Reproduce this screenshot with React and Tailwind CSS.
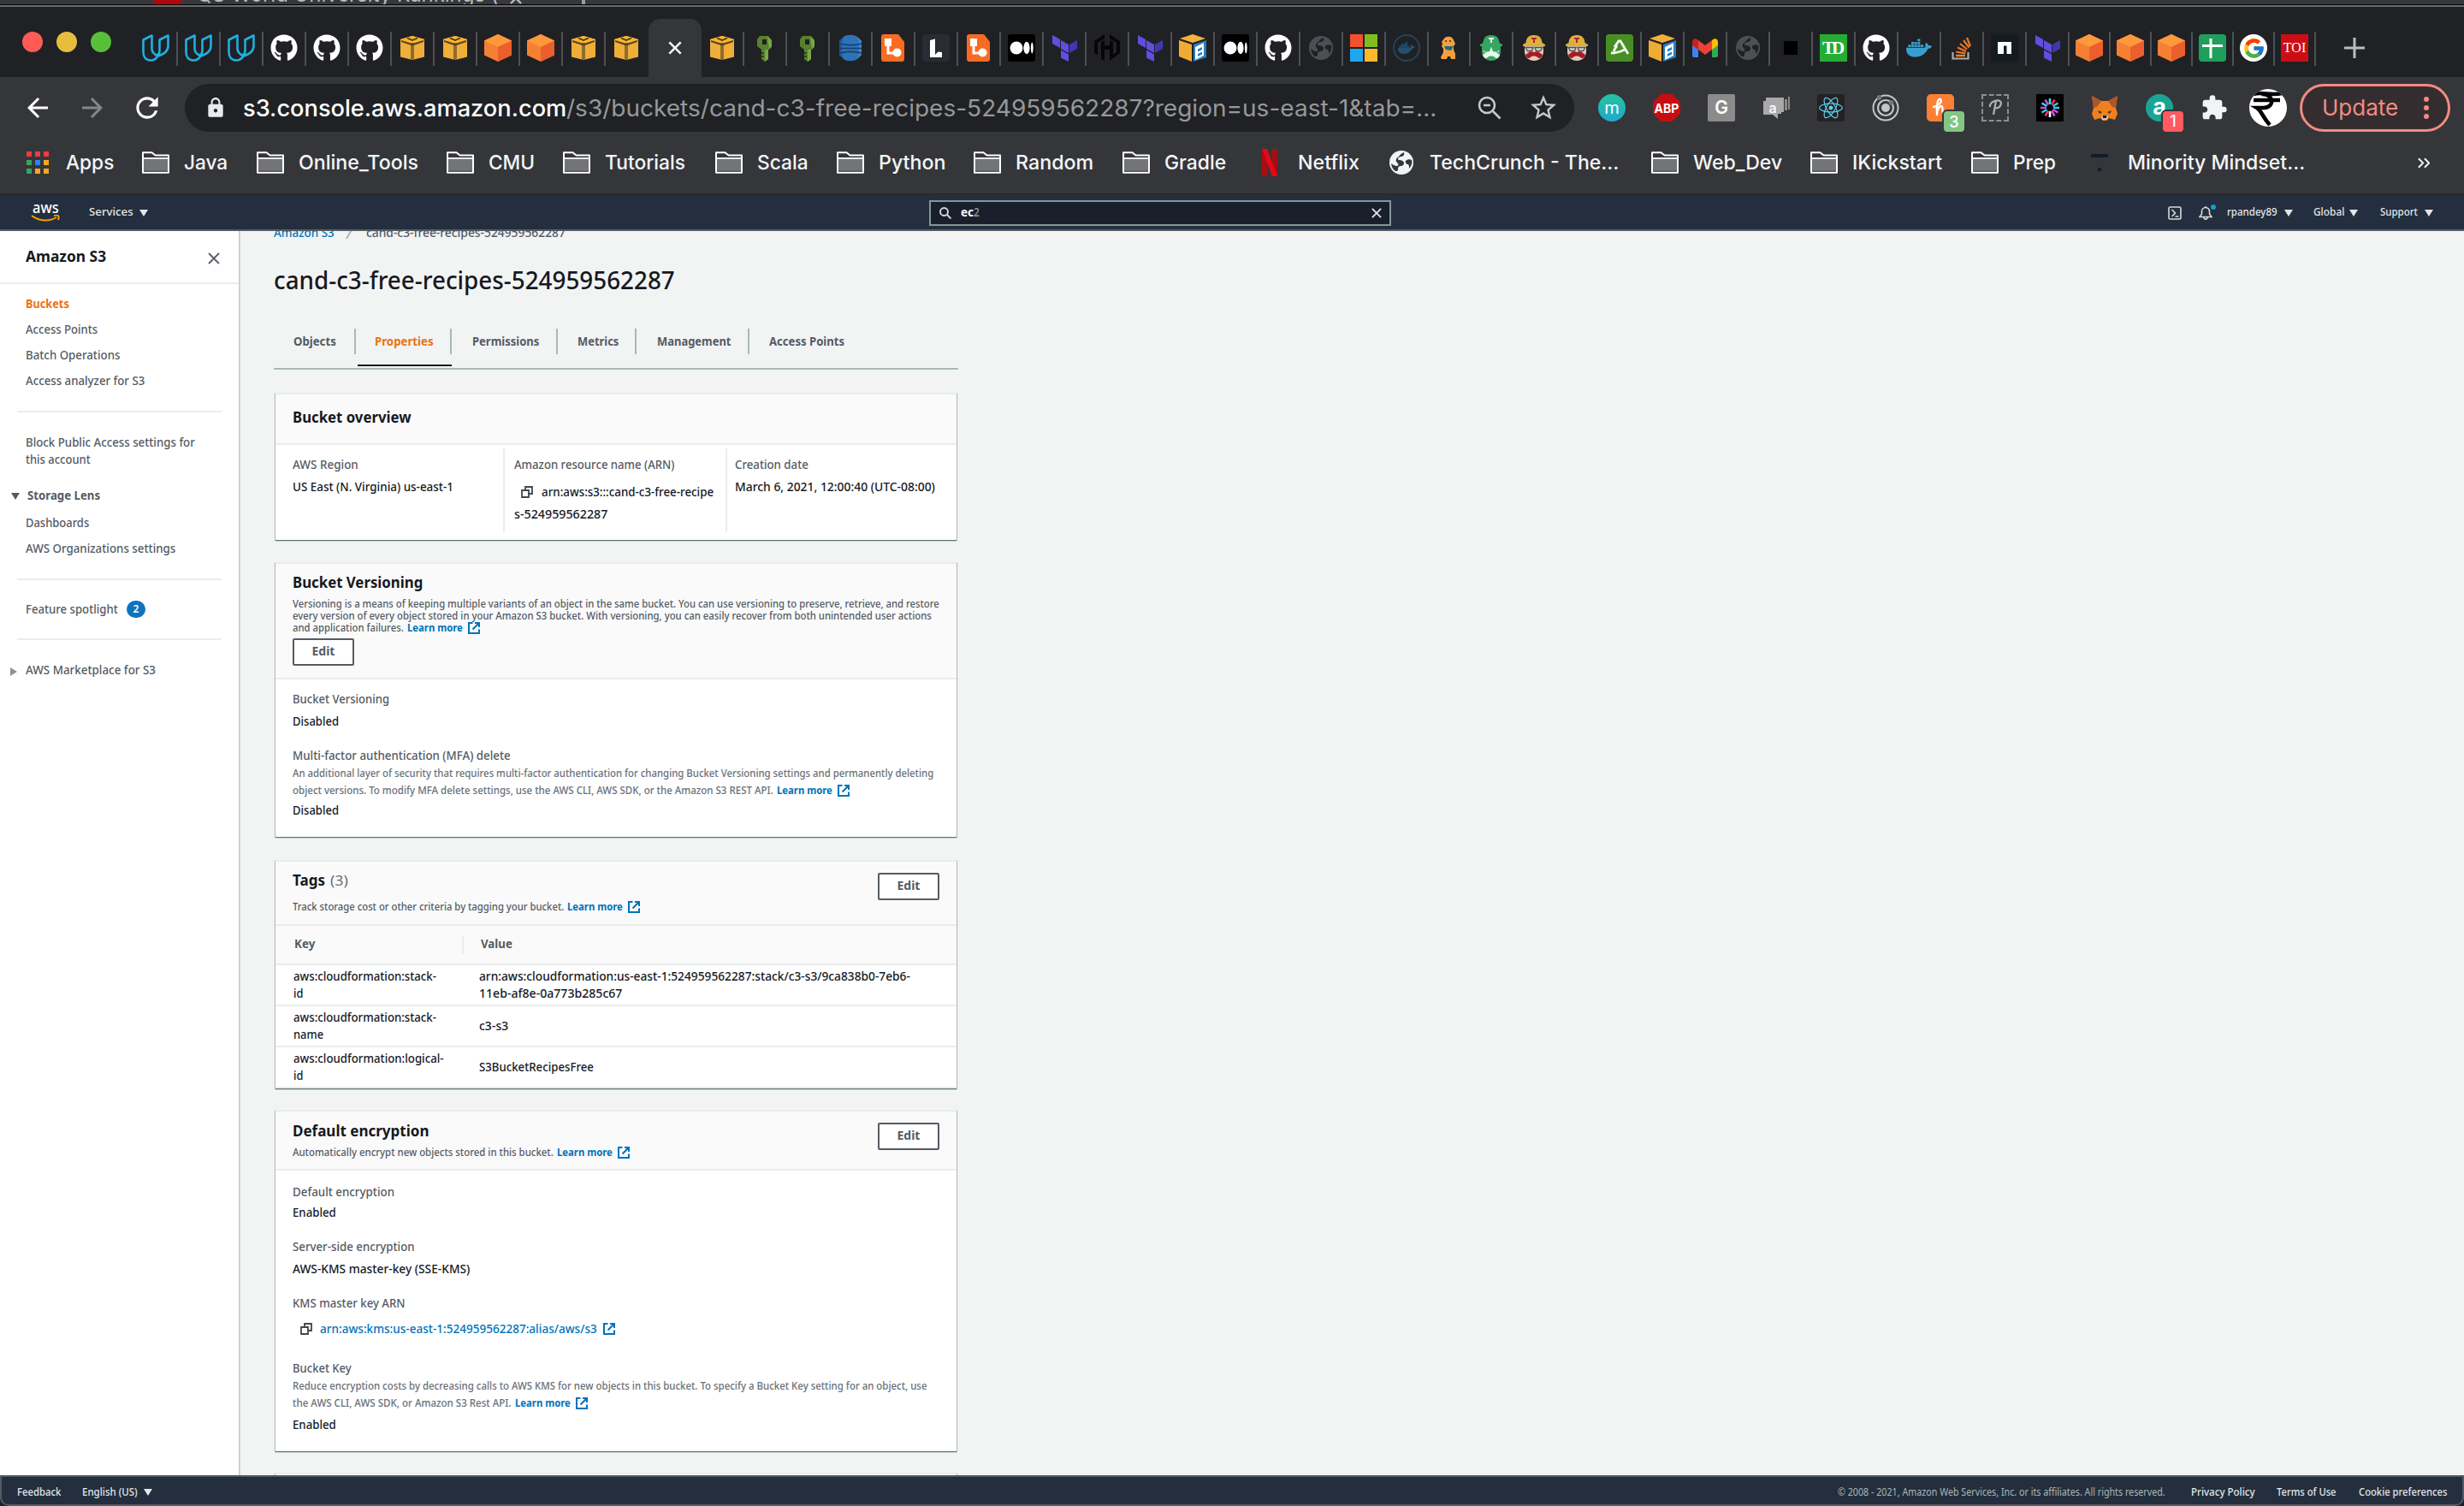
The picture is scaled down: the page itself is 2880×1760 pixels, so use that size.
import React, { useLayoutEffect, useRef, useState } from "react";
import { FaGithub, FaDocker, FaReact } from "react-icons/fa";
import { FcGoogle } from "react-icons/fc";
import { MdExtension, MdArrowBack, MdArrowForward, MdRefresh, MdLock, MdStarBorder } from "react-icons/md";

/* Single line of text condensed to a given width. */
function T({ w, className = "", children }) {
  const ref = useRef(null);
  const [k, setK] = useState(1);
  useLayoutEffect(() => {
    if (ref.current) setK(w / ref.current.offsetWidth);
  }, [w]);
  return (
    <span className={"inline-block shrink-0 whitespace-nowrap " + className} style={{ width: w }}>
      <span ref={ref} className="inline-block origin-left" style={{ transform: `scaleX(${k})` }}>
        {children}
      </span>
    </span>
  );
}

/* ---------- tab icons ---------- */
const Github = () => <FaGithub className="size-8 text-white" />;
const Udacity = () => (
  <svg viewBox="0 0 32 32" className="size-8" fill="none" stroke="#1fb0e0" strokeWidth="2.600" strokeLinejoin="round">
    <path d="M1.500 6.500 11.500 1.500v15.500c0 4 3 6.500 7 8.500-2 3-4 5-8 5-6 0-9-4-9-9.500z" />
    <path d="M18.500 25.500c7-2 12-6 12-12V1.500L20.500 6.500V19c0 3-1 5-4 5.500" />
  </svg>
);
const GoldBox = () => (
  <svg viewBox="0 0 32 32" className="size-8">
    <path d="M2 6 16 2l14 4v20.500L16 30 2 26.500z" fill="#efae3a" />
    <path d="M2 6 16 2l14 4-14 5z" fill="#fab42c" />
    <path d="M14 10h4v20h-4z" fill="#8d6c2f" />
    <path d="M3 7l13 4 13-4v2l-13 4.500L3 9z" fill="#5b451d" />
    <path d="m10 4.500 6 2.500 6-2.500" fill="none" stroke="#463818" strokeWidth="1.800" />
  </svg>
);
const OrangeCube = () => (
  <svg viewBox="0 0 32 32" className="size-8">
    <path d="M16 0 32 7.500v17L16 32 0 24.500v-17z" fill="#f58033" />
    <path d="M16 0 32 7.500 16 15 0 7.500z" fill="#fd993a" />
    <path d="M32 7.500v17L16 32V15z" fill="#ea5f2d" />
  </svg>
);
const KeyIcon = () => (
  <svg viewBox="0 0 32 32" className="size-8">
    <path d="M10 2h10l4 5v8l-4 4v10l-4 3-4-3V18l-5-4V6z" fill="#58802f" />
    <path d="M16 18h4v11l-4 3zM19 3l5 4v7l-3 3z" fill="#7aa648" />
    <path d="M13 6h5v6h-5z" fill="#202124" />
    <path d="M12 21h3v2h-3zM12 25h3v2h-3z" fill="#2e4518" />
  </svg>
);
const Dynamo = () => (
  <svg viewBox="0 0 32 32" className="size-8">
    <path d="M8 3c4-3 12-3 16 0l5 5v16l-5 5c-4 3-12 3-16 0l-5-5V8z" fill="#2e73b8" />
    <path d="M8 3c-3 8-3 18 0 26l-5-5V8z" fill="#215a96" />
    <path d="M24 3c3 8 3 18 0 26l5-5V8z" fill="#3f87c9" />
    <path d="M3 11c8 2 18 2 26 0M3 16.500h26M3 22c8-2 18-2 26 0" stroke="#173f6e" strokeWidth="1.500" fill="none" />
  </svg>
);
const Lucid = () => (
  <svg viewBox="0 0 32 32" className="size-8">
    <path d="M5 0h17l7 9v20a3 3 0 0 1-3 3H5a3 3 0 0 1-3-3V3a3 3 0 0 1 3-3z" fill="#f96b22" />
    <path d="M10 10v12h8" fill="none" stroke="#fff" strokeWidth="3" />
    <path d="M6 5h8v9H6z" fill="#fff" />
    <circle cx="20.500" cy="21.500" r="5" fill="#fff" />
  </svg>
);
const DarkL = () => (
  <svg viewBox="0 0 32 32" className="size-8">
    <rect width="32" height="32" rx="4" fill="#282c33" />
    <path d="M9 7l6-1.500V20l8 1v6H9z" fill="#fff" />
    <path d="m15 24 4-4-4-1z" fill="#282c33" />
  </svg>
);
const Medium = () => (
  <svg viewBox="0 0 32 32" className="size-8">
    <rect width="32" height="32" rx="3" fill="#000" />
    <circle cx="10" cy="16" r="7.500" fill="#fff" />
    <ellipse cx="22" cy="16" rx="3.600" ry="7.200" fill="#fff" />
    <ellipse cx="28.300" cy="16" rx="1.400" ry="6.500" fill="#fff" />
  </svg>
);
const Terraform = () => (
  <svg viewBox="0 0 32 32" className="size-8">
    <path d="m2 1 9 5v10l-9-5zM12 7l9 5v10l-9-5zM12 18.500l9 5V32l-9-4.500z" fill="#5f4ee0" />
    <path d="m31 7-9 5v10l9-5z" fill="#4038b0" />
  </svg>
);
const Hashi = () => (
  <svg viewBox="0 0 32 32" className="size-8" fill="#070708">
    <path d="M13 0v5L5 10v14l-4-2V8zM13 7v6h6V7l4 2v18l-4-2v-7h-6v13l-4-2V9zM19 0l12 8v14l-12 9v-5l8-5V10l-8-5z" />
  </svg>
);
const BoxDoc = () => (
  <svg viewBox="0 0 32 32" className="size-8">
    <path d="M16 0 31 5 16 10 1 5z" fill="#f3b13c" />
    <path d="M0 7l15 5v20L0 26z" fill="#f0ab34" />
    <path d="m17 12 15-5v20l-15 5z" fill="#2b7cc0" />
    <path d="m19 15 10-5v15l-10 5z" fill="#fff" />
    <path d="m22 17.500 5-2.500v3l-5 2.500zM22 23l5-2.500v3L22 26z" fill="#2b7cc0" />
  </svg>
);
const Globe = ({ c = "#4c4f53", bg = "#202124" }) => (
  <svg viewBox="0 0 32 32" className="size-8">
    <circle cx="16" cy="16" r="14" fill={c} />
    <path d="M19 4c1 3-1 5-4 5-3 1-4 3-2 4 3 0 6 1 6 4 0 2-2 3-4 3-3 0-3 3-3 5-1 1-2 1-3 1-3-2-4.500-5-5-9 2 1 4 3 7 3 3-1 1-3-1-5-1-3 1-5 3-6 1-2 3-4 6-5zM28 13c-2-1-5-1-7 1-1 2 1 4 3 4 1 1 1 3 1 5 3-3 4-7 3-10z" fill={bg} />
  </svg>
);
const Microsoft = () => (
  <div className="grid size-8 grid-cols-2 gap-[2px]">
    <i className="bg-[#f25130]" /><i className="bg-[#80bc20]" /><i className="bg-[#1ea7ee]" /><i className="bg-[#fdb92c]" />
  </div>
);
const DockerRing = () => (
  <div className="flex size-8 items-center justify-center rounded-full border-2 border-[#24445a]">
    <FaDocker className="size-5 text-[#24516d]" />
  </div>
);
const Puppy = () => (
  <svg viewBox="0 0 32 32" className="size-8">
    <path d="M11 5c2-3 8-3 10 0l3 6-2 3v4l2 5v6h-5l-1-3h-3l-1 3H8l-1-2 3-6v-4l-2-3 1-3-1-2z" fill="#f5a040" />
    <path d="M11 14h11l-3 5-6-1z" fill="#1f6b78" />
    <circle cx="13" cy="8" r="1" fill="#3a2a1a" /><circle cx="18" cy="8" r="1" fill="#3a2a1a" />
  </svg>
);
const Travis = ({ green }) => (
  <svg viewBox="0 0 32 32" className="size-8">
    <path d="M5 12h22v8c0 7-5 11-11 11S5 27 5 20z" fill={green ? "#37a661" : "#e2cbbb"} />
    <path d="M7 15h18v6l-4-1-5 2-5-2-4 1z" fill={green ? "#e8f6ec" : "#e2cbbb"} />
    <path d="M9 22c3-3 5-1 7-1s4-2 7 1l3 2c-1 4-4 5-6 3-1-2-7-2-8 0-2 2-5 1-6-3z" fill={green ? "#e8f6ec" : "#a51c24"} />
    <path d="M16 1C9 1 7 5 6.500 10L3 12v2h26v-2l-3.500-2C25 5 23 1 16 1z" fill={green ? "#37a661" : "#d9b13b"} />
    <path d="M13 4h6v2h-2v4h-2V6h-2z" fill={green ? "#e8f6ec" : "#b5232c"} />
    <path d="M6 15.500h9l-1.500 4h-5zM17 15.500h9l-2.500 4h-5z" fill={green ? "#37a661" : "#cbd3d4"} stroke={green ? "#37a661" : "#55504c"} strokeWidth="1.300" />
  </svg>
);
const GreenA = () => (
  <svg viewBox="0 0 32 32" className="size-8">
    <rect width="32" height="32" rx="4" fill="#478f25" />
    <path d="M10 15 15 8h2l9 15M6 22c6 0 12-2 16-4M13 13l-4 7" fill="none" stroke="#f2f8ee" strokeWidth="2.800" />
  </svg>
);
const Gmail = () => (
  <svg viewBox="0 0 32 32" className="size-8">
    <path d="M1 10h7v17H3a2 2 0 0 1-2-2z" fill="#3f82ee" />
    <path d="M24 10h7v15a2 2 0 0 1-2 2h-5z" fill="#33a853" />
    <path d="M24 7c3-3 7-2 7 2v4l-7 5z" fill="#fbbc05" />
    <path d="M1 9c0-4 4-5 7-2v11l-7-5z" fill="#c5221f" />
    <path d="m8 7 8 6 8-6v11l-8 6-8-6z" fill="#ea4335" />
  </svg>
);
const BlackSquare = () => <div className="size-4 bg-black" />;
const TD = () => (
  <div className="flex size-8 items-center justify-center bg-[#23ad35] font-['Liberation_Serif'] text-[21px] leading-none font-bold tracking-[-3px] text-white">
    <span className="pr-[3px]">TD</span>
  </div>
);
const Docker = () => <FaDocker className="size-[30px] text-[#3a9fd0]" />;
const Stack = () => (
  <svg viewBox="0 0 32 32" className="size-8" fill="none">
    <path d="M5.500 21v7.500h18V21" stroke="#a9adb3" strokeWidth="2.200" />
    <path d="M9 25h11" stroke="#f48024" strokeWidth="2.400" />
    <path d="m9.300 20.500 11 1.800M11 15.500l10 4.500M14 11l8 6.500M18 7l6.500 8.500M22 4l4 10" stroke="#e8782a" strokeWidth="2.200" />
  </svg>
);
const Npm = () => (
  <svg viewBox="0 0 32 32" className="size-8">
    <rect width="32" height="32" fill="#141b22" />
    <path d="M8 9h16v14h-5.500V13.500h-3.500V23H8z" fill="#fff" />
  </svg>
);
const Sheets = () => (
  <svg viewBox="0 0 32 32" className="size-8">
    <rect width="32" height="32" rx="4" fill="#209e5b" />
    <path d="M4 12h24v3H4zM12.500 5h3v23h-3z" fill="#fff" />
  </svg>
);
const Google = () => (
  <div className="flex size-8 items-center justify-center rounded-full bg-white">
    <FcGoogle className="size-[27px]" />
  </div>
);
const TOI = () => (
  <div className="flex size-8 items-center justify-center bg-[#cc0e14] font-['Liberation_Serif'] text-[16px] leading-none text-white">
    TOI
  </div>
);

const leftTabs = [Udacity, Udacity, Udacity, Github, Github, Github, GoldBox, GoldBox, OrangeCube, OrangeCube, GoldBox, GoldBox];
const GreenTravis = () => <Travis green />;
const midTabs = [
  KeyIcon, KeyIcon, Dynamo, Lucid, DarkL, Lucid, Medium, Terraform, Hashi, Terraform, BoxDoc, Medium, Github, Globe,
  Microsoft, DockerRing, Puppy, GreenTravis, Travis, Travis, GreenA, BoxDoc, Gmail, Globe, BlackSquare, TD, Github,
  Docker, Stack, Npm, Terraform,
];
const rightTabs = [OrangeCube, OrangeCube, OrangeCube, Sheets, Google, TOI];

function Tab({ icon: Icon, className = "w-[50px]", bar = true }) {
  return (
    <div className={"flex h-10 shrink-0 items-center justify-center border-r-2 " + (bar ? "border-[#4d5054] " : "border-transparent ") + className}>
      <div className="flex h-10 items-center pb-[2px]">
        <Icon />
      </div>
    </div>
  );
}

function TabStrip() {
  return (
    <div className="flex h-[82px] shrink-0 items-end bg-[#202124]">
      <div className="flex h-full items-start gap-4 pt-[29px] pl-[26px]">
        <i className="size-6 rounded-full bg-[#fe5b57]" />
        <i className="size-6 rounded-full bg-[#e5be3c]" />
        <i className="size-6 rounded-full bg-[#58c038]" />
      </div>
      <div className="ml-[28px] flex h-full items-start pt-[29px]">
        {leftTabs.map((I, i) => <Tab key={i} icon={I} bar={i < 11} className="w-[50px]" />)}
      </div>
      <div className="flex h-[68px] w-[62px] shrink-0 items-center justify-center rounded-t-[14px] bg-[#35363a]">
        <svg viewBox="0 0 18 18" className="size-4"><path d="m1.500 1.500 15 15m0-15-15 15" stroke="#fff" strokeWidth="2.800" /></svg>
      </div>
      <div className="flex h-full items-start pt-[29px]">
        <Tab icon={GoldBox} className="w-[50px]" />
        {midTabs.map((I, i) => <Tab key={i} icon={I} className="w-[49.970px]" />)}
        {rightTabs.map((I, i) => <Tab key={i} icon={I} className="w-[48px]" />)}
      </div>
      <div className="flex h-full items-start pt-[36px] pl-[33px]">
        <svg viewBox="0 0 24 24" className="size-6"><path d="M12 0v24M0 12h24" stroke="#b9bdc1" strokeWidth="3" /></svg>
      </div>
    </div>
  );
}

/* ---------- extensions ---------- */
const Slot = ({ children, className = "" }) => (
  <div className={"relative flex size-8 shrink-0 items-center justify-center " + className}>{children}</div>
);
const Badge = ({ className, children }) => (
  <span className={"absolute top-[18px] left-[18px] box-content flex h-6 w-6 items-center justify-center rounded-[6px] border-2 border-[#35363a] text-[18px] font-medium text-white " + className}>{children}</span>
);

function Extensions() {
  return (
    <div className="ml-[28px] flex items-center gap-8">
      <Slot className="rounded-full bg-gradient-to-b from-[#26c2a0] to-[#20a8cc] text-[20px] text-white">m</Slot>
      <Slot>
        <svg viewBox="0 0 32 32" className="absolute size-8"><path d="M9.500 0h13L32 9.500v13L22.500 32h-13L0 22.500v-13z" fill="#c70d12" /></svg>
        <T w={29} className="relative text-[14px] font-bold text-white">ABP</T>
      </Slot>
      <Slot className="rounded-[2px] bg-[#8b8b8b] text-[21px] font-semibold text-white">G</Slot>
      <Slot>
        <svg viewBox="0 0 32 32" className="absolute size-8"><path d="M1 8h3V4h21v17h-3v2h-4v6l-6-5H1z" fill="#a9a9a9" /><path d="M26 6h3v13h-3zM30 3h2v15h-2z" fill="#8a8a8a" /></svg>
        <span className="relative pr-2 pb-px text-[16px] font-medium text-white">a</span>
      </Slot>
      <Slot className="rounded-[3px] bg-[#222]"><FaReact className="size-7 text-[#5fcff5]" /></Slot>
      <Slot>
        <svg viewBox="0 0 32 32" className="size-8" fill="none" stroke="#c4c5c7"><circle cx="16" cy="16" r="14.500" strokeWidth="2" /><circle cx="16" cy="16" r="9" strokeWidth="2.200" /><circle cx="16" cy="16" r="5" fill="#c4c5c7" stroke="none" /><circle cx="8.500" cy="4" r="2.500" fill="#777" stroke="#777" /><circle cx="22.500" cy="10" r="2.500" fill="#777" stroke="#777" /></svg>
      </Slot>
      <Slot className="rounded-[5px] bg-[#fd7f35]">
        <svg viewBox="0 0 32 32" className="size-8" fill="none" stroke="#fff" strokeWidth="2.400" strokeLinecap="round"><path d="M8 15c6-1 11-7 8-9s-5 7-4 18M12 22c1-5 3-8 5-8 3 0 0 8 3 9" /></svg>
        <Badge className="bg-[#81c784]">3</Badge>
      </Slot>
      <Slot className="border-2 border-dashed border-[#8d8e91]">
        <svg viewBox="0 0 28 28" className="size-7" fill="none" stroke="#aeb0b2" strokeWidth="2.200"><path d="M8 13c-1-6 11-11 13-5 0 5-5 8-8 5M15 6l-3 16" /></svg>
      </Slot>
      <Slot className="bg-black">
        <svg viewBox="0 0 32 32" className="size-8" strokeWidth="2.600">
          <path d="M16 5v7" stroke="#35e0e8" /><path d="M16 20v7" stroke="#fff" />
          <path d="m10.500 6.500 3.500 6M5 16h7" stroke="#c050f0" /><path d="m21.500 6.500-3.500 6M10.500 25.500l3.500-6" stroke="#f5285f" />
          <path d="m25.500 10.500-6 3.500M6.500 21.500l6-3.500M20 16h7" stroke="#35c5f0" /><path d="m25.500 21.500-6-3.500M21.500 25.500l-3.500-6" stroke="#d850e8" /><path d="m6.500 10.500 6 3.500" stroke="#35e0e8" />
        </svg>
      </Slot>
      <Slot>
        <svg viewBox="0 0 32 32" className="size-8">
          <path d="m1 2 11 6h8l11-6-2 14 2 7-3 7-7-2-3 3h-4l-3-3-7 2-3-7 2-7z" fill="#f0801f" />
          <path d="m1 2 11 6-5 7-4 1zM31 2 20 8l5 7 4 1z" fill="#a8562a" />
          <path d="m8 19 5 2-3 2zM24 19l-5 2 3 2z" fill="#273440" />
          <path d="M12 26h8l-1 4h-6z" fill="#d7c1b3" /><path d="M14 25h4v3h-4z" fill="#1b1b1b" />
        </svg>
      </Slot>
      <Slot className="rounded-full bg-[#19a595] text-[27px] leading-none font-bold text-white">
        <span className="pb-1">a</span>
        <Badge className="bg-[#ff5a5f]">1</Badge>
      </Slot>
      <Slot><MdExtension className="size-8 text-[#f1f3f4]" /></Slot>
    </div>
  );
}

function Toolbar() {
  return (
    <div className="flex h-[72px] shrink-0 items-center pl-[26px]">
      <MdArrowBack className="size-9 text-white" />
      <MdArrowForward className="ml-[28px] size-9 text-[#85868a]" />
      <MdRefresh className="ml-[27px] size-[38px] text-white" />
      <div className="ml-[25px] flex h-14 w-[1624px] shrink-0 items-center rounded-full bg-[#202124] text-[27px] leading-none">
        <MdLock className="ml-[23px] size-[26px] text-[#e8eaed]" />
        <T w={378} className="ml-[19px] font-medium text-white">s3.console.aws.amazon.com</T>
        <T w={1017} className="text-[#96989b]">/s3/buckets/cand-c3-free-recipes-524959562287?region=us-east-1&amp;tab=...</T>
        <svg viewBox="0 0 28 28" className="ml-[48px] size-7" fill="none" stroke="#c6c8ca" strokeWidth="2.600"><circle cx="11" cy="11" r="9" /><path d="m18 18 8.500 8.500M7 11h8" /></svg>
        <MdStarBorder className="ml-[31px] size-9 text-[#c6c8ca]" />
      </div>
      <Extensions />
      <div className="ml-[25px] flex size-11 shrink-0 items-center justify-center overflow-hidden rounded-full bg-white">
        <svg viewBox="0 0 44 44" className="size-11" fill="none" stroke="#000" strokeWidth="4.500"><path d="M5 6c10-3 20 2 33-1M5 13h31M14 6c14-1 17 15 3 16H9c5 3 6 10 15 20" /></svg>
      </div>
      <div className="ml-[15px] flex h-14 w-[176px] shrink-0 items-center rounded-full border-[3px] border-[#f28b82] bg-[#342d30] text-[26px] leading-none text-[#f28b82]">
        <T w={89} className="ml-[23px]">Update</T>
        <div className="ml-[30px] flex flex-col gap-1">
          <i className="size-[6px] rounded-full bg-[#f28b82]" /><i className="size-[6px] rounded-full bg-[#f28b82]" /><i className="size-[6px] rounded-full bg-[#f28b82]" />
        </div>
      </div>
    </div>
  );
}

/* ---------- bookmarks ---------- */
const Folder = () => (
  <svg viewBox="0 0 32 26" className="h-[26px] w-8">
    <path d="M1 1.200h10.500l4 3.300H31v20.300H1z" fill="#35363a" stroke="#fff" strokeWidth="2" strokeLinejoin="round" />
    <path d="M2 9h28v13H2z" fill="#737477" /><path d="M2 22h28v2H2z" fill="#5f6063" /><path d="M2 8h28" stroke="#fff" strokeWidth="1.800" />
  </svg>
);
const Netflix = () => (
  <svg viewBox="0 0 32 32" className="size-8"><path d="M7 0h6v32H7zM19 0h6v32h-6z" fill="#a80d16" /><path d="M7 0h6l12 32h-6z" fill="#e50914" /></svg>
);
const WhiteGlobe = () => <Globe c="#f1f3f4" bg="#35363a" />;
const Minority = () => (
  <svg viewBox="0 0 32 32" className="size-8"><path d="M6 6h20v4H6z" fill="#0d1c2e" /><circle cx="16" cy="24" r="2.200" fill="#0d1c2e" /></svg>
);
const bookmarks = [
  [134, Folder, 51, "Java"], [222, Folder, 140, "Online_Tools"], [136, Folder, 54, "CMU"], [178, Folder, 94, "Tutorials"],
  [142, Folder, 60, "Scala"], [160, Folder, 78, "Python"], [174, Folder, 91, "Random"], [156, Folder, 72, "Gradle"],
  [154, Netflix, 72, "Netflix"], [308, WhiteGlobe, 221, "TechCrunch - The..."], [186, Folder, 104, "Web_Dev"],
  [188, Folder, 105, "IKickstart"], [134, Folder, 50, "Prep"], [388, Minority, 207, "Minority Mindset..."],
];
const appDots = ["bg-[#f23b3b]", "bg-[#f23b3b]", "bg-[#f23b3b]", "bg-[#3aa35b]", "bg-[#2684fc]", "bg-[#f6a723]", "bg-[#3aa35b]", "bg-[#f6a723]", "bg-[#f6a723]"];

function Bookmarks() {
  return (
    <div className="flex h-16 shrink-0 items-center pb-[8px] pl-[31px] text-[23.500px] leading-none font-medium text-[#f4f5f6]">
      <div className="flex w-[135px] shrink-0 items-center">
        <div className="grid grid-cols-3 gap-x-1 gap-y-[4px]">
          {appDots.map((c, i) => <i key={i} className={"size-[6px] " + c} />)}
        </div>
        <T w={56} className="ml-5">Apps</T>
      </div>
      {bookmarks.map(([w, Icon, tw, label]) => (
        <div key={label} className="flex shrink-0 items-center gap-[17px]" style={{ width: w }}>
          <Icon />
          <T w={tw}>{label}</T>
        </div>
      ))}
      <svg viewBox="0 0 16 14" className="h-[13px] w-[14px]" fill="none" stroke="#f1f3f4" strokeWidth="2.200"><path d="m1 1 6 6-6 6M9 1l6 6-6 6" /></svg>
    </div>
  );
}

/* ---------- AWS header ---------- */
const Caret = ({ className = "" }) => (
  <svg viewBox="0 0 10 8" className={"h-2 w-[10px] shrink-0 " + className}><path d="M0 0h10L5 8z" fill="currentColor" /></svg>
);

function AwsHeader() {
  return (
    <div className="flex h-[42px] shrink-0 items-center border-b-2 border-[#545b64] bg-[#232f3e] pt-px text-[12.500px] leading-none font-medium text-[#e3e6e8]">
      <div className="ml-[36px] flex w-[34px] flex-col items-center">
        <T w={31} className="h-[14px] text-[18px] leading-[11px] font-medium text-white">aws</T>
        <svg viewBox="0 0 34 9" className="h-[9px] w-[34px]" fill="none" stroke="#f90" strokeWidth="2"><path d="M1 1c9 7 21 7 29 2M27 1c4-1 7-1 5 5" /></svg>
      </div>
      <T w={52} className="ml-[34px]">Services</T>
      <Caret className="ml-[7px]" />
      <div className="ml-[913px] flex h-[30px] w-[540px] shrink-0 items-center border-2 border-[#879596] bg-[#1a202b]">
        <svg viewBox="0 0 14 14" className="ml-[10px] size-[14px]" fill="none" stroke="#d5dbdb" strokeWidth="1.900"><circle cx="5.500" cy="5.500" r="4.500" /><path d="m9 9 4.500 4.500" /></svg>
        <T w={15} className="ml-[11px] text-[13.500px] font-bold text-white">ec</T>
        <T w={7} className="text-[13.500px] text-[#95a0a3]">2</T>
        <svg viewBox="0 0 14 14" className="ml-[458px] size-3" stroke="#e3e6e8" strokeWidth="2"><path d="m1 1 12 12M13 1 1 13" /></svg>
      </div>
      <svg viewBox="0 0 16 16" className="ml-[908px] size-4" fill="none" stroke="#d5dbdb" strokeWidth="1.600"><rect x="1" y="1" width="14" height="14" rx="1.500" /><path d="m4.500 4 4 4-4 4M8.500 12h4" /></svg>
      <div className="relative ml-[20px] size-4">
        <svg viewBox="0 0 16 16" className="size-4" fill="none" stroke="#d5dbdb" strokeWidth="1.600"><path d="M1 12.500 3.500 9V6a4.500 4.500 0 0 1 9 0v3l2.500 3.500zM6 13c0 3 4 3 4 0M8 2V0" /></svg>
        <i className="absolute -top-[2px] left-[14px] size-[6px] rounded-full bg-[#18a0c8]" />
      </div>
      <T w={59} className="ml-[17px]">rpandey89</T>
      <Caret className="ml-[8px]" />
      <T w={36} className="ml-[24px]">Global</T>
      <Caret className="ml-[6px]" />
      <T w={44} className="ml-[26px]">Support</T>
      <Caret className="ml-[8px]" />
    </div>
  );
}

/* ---------- sidebar ---------- */
const Item = ({ w, className = "", children }) => (
  <div className={"flex h-[30px] items-center pl-[30px] " + className}><T w={w}>{children}</T></div>
);
const Rule = ({ className = "" }) => <div className={"mx-5 h-[2px] bg-[#eaeded] " + className} />;

function Sidebar() {
  return (
    <div className="w-[281px] shrink-0 border-r-2 border-[#ccd2d3] bg-white text-[14px] leading-none font-medium text-[#545b64]">
      <div className="flex h-[62px] items-center border-b-2 border-[#eaeded] pl-[30px]">
        <T w={94} className="pb-[2px] text-[17px] font-bold text-[#16191f]">Amazon S3</T>
        <svg viewBox="0 0 14 14" className="mt-1 ml-[119px] size-[14px]" stroke="#545b64" strokeWidth="1.800"><path d="m1 1 12 12M13 1 1 13" /></svg>
      </div>
      <Item w={51} className="mt-[8px] font-bold text-[#ec7211]">Buckets</Item>
      <Item w={84}>Access Points</Item>
      <Item w={110}>Batch Operations</Item>
      <Item w={139}>Access analyzer for S3</Item>
      <Rule className="mt-5" />
      <div className="mt-[25px] flex h-5 items-center pl-[30px]"><T w={198}>Block Public Access settings for</T></div>
      <div className="flex h-5 items-center pl-[30px]"><T w={76}>this account</T></div>
      <div className="mt-[17px] flex h-[30px] items-center pl-[13px] font-bold">
        <Caret className="mt-[2px] mr-[9px]" /><T w={85}>Storage Lens</T>
      </div>
      <Item w={74} className="mt-[2px]">Dashboards</Item>
      <Item w={175}>AWS Organizations settings</Item>
      <Rule className="mt-5" />
      <div className="mt-[19px] flex h-[29px] items-center pl-[30px]">
        <T w={108}>Feature spotlight</T>
        <span className="ml-[10px] flex h-[20px] w-[22px] items-center justify-center rounded-full bg-[#0f73bb] text-[12px] font-semibold text-white">2</span>
      </div>
      <Rule className="mt-5" />
      <div className="mt-5 flex h-[30px] items-center pl-[12px]">
        <svg viewBox="0 0 8 10" className="mt-1 mr-[10px] h-[10px] w-2"><path d="m0 0 8 5-8 5z" fill="#879596" /></svg>
        <T w={152}>AWS Marketplace for S3</T>
      </div>
    </div>
  );
}

/* ---------- content ---------- */
const Ext = ({ className = "" }) => (
  <svg viewBox="0 0 14 14" className={"size-[14px] shrink-0 " + className} fill="none" stroke="#0073bb" strokeWidth="2"><path d="M5.500 1H1v12h12V8.500M8 1h5v5M13 1 5.500 8.500" /></svg>
);
const Copy = ({ className = "" }) => (
  <svg viewBox="0 0 14 14" className={"size-[14px] shrink-0 " + className} fill="none" stroke="#414750" strokeWidth="1.800"><path d="M1 5h8v8H1zM5 4.500V1h8v8H9.500" /></svg>
);
const Learn = () => (
  <>
    <T w={65} className="ml-1 text-[12px] font-bold text-[#0073bb]">Learn more</T>
    <Ext className="ml-[6px]" />
  </>
);
const Row = ({ className = "h-5", children }) => <div className={"flex shrink-0 items-center " + className}>{children}</div>;
const Edit = ({ className = "" }) => (
  <div className={"flex h-8 w-[72px] shrink-0 items-center justify-center rounded-[2px] border-2 border-[#545b64] bg-white pb-[2px] text-[14px] font-bold text-[#545b64] " + className}>
    <T w={27}>Edit</T>
  </div>
);
const Card = ({ className = "", children }) => (
  <div className={"ml-[2px] flex w-[796px] shrink-0 flex-col overflow-hidden border-t-2 border-[#eaeded] bg-white shadow-[0_1px_1px_#5f7072,1px_1px_1px_#c4cbcc,-1px_1px_1px_#c4cbcc] " + className}>
    {children}
  </div>
);
const H2 = ({ w, children }) => <T w={w} className="pb-[3px] text-[17px] font-bold text-[#16191f]">{children}</T>;

const tabs = [
  ["Objects", 50, "w-[96px] pl-[23px]"], ["Properties", 69, "w-[112px] pl-[22px]"], ["Permissions", 78, "w-[124px] pl-[24px]"],
  ["Metrics", 48, "w-[92px] pl-[23px]"], ["Management", 86, "w-[132px] pl-[24px]"], ["Access Points", 88, "w-[112px] pl-[23px]"],
];
const tags = [
  [["aws:cloudformation:stack-", 167], ["id", 11], [["arn:aws:cloudformation:us-east-1:524959562287:stack/c3-s3/9ca838b0-7eb6-", 504], ["11eb-af8e-0a773b285c67", 167]]],
  [["aws:cloudformation:stack-", 167], ["name", 35], [["c3-s3", 34]]],
  [["aws:cloudformation:logical-", 176], ["id", 11], [["S3BucketRecipesFree", 134]]],
];

function Content() {
  return (
    <div className="flex w-[2599px] flex-col overflow-hidden bg-[#f2f4f4] pl-[39px] text-[14px] leading-none font-medium text-[#16191f]">
      <div className="flex h-[16px] shrink-0 items-end overflow-hidden">
        <div className="flex h-[29px] items-center text-[#545b64]">
          <T w={71} className="text-[#0073bb]">Amazon S3</T>
          <svg viewBox="0 0 10 16" className="ml-[13px] h-4 w-[10px]"><path d="m1 15 8-14" stroke="#aab7b8" strokeWidth="2" /></svg>
          <T w={233} className="ml-[14px]">cand-c3-free-recipes-524959562287</T>
        </div>
      </div>
      <Row className="mt-[21px] h-10 text-[28px]"><T w={469}>cand-c3-free-recipes-524959562287</T></Row>
      <div className="mt-[37px] flex h-[48px] w-[800px] shrink-0 border-b-2 border-[#aab7b8] font-bold text-[#545b64]">
        {tabs.map(([t, w, c], i) => (
          <div key={t} className="flex flex-col">
            <div className={"flex h-[30px] items-center " + c + (i < 5 ? " border-r-2 border-[#aab7b8]" : "")}>
              <T w={w} className={i === 1 ? "text-[#ec7211]" : ""}>{t}</T>
            </div>
            {i === 1 && <div className="mt-3 ml-[2px] h-[2px] bg-[#16191f]" />}
          </div>
        ))}
      </div>

      <Card className="mt-[27px] h-[172px]">
        <Row className="h-[59px] border-b-2 border-[#eaeded] bg-[#fafafa] pb-px pl-[20px]"><H2 w={139}>Bucket overview</H2></Row>
        <div className="flex h-[102px] pt-1">
          <div className="w-[268px] border-r-2 border-[#eaeded] pl-[20px]">
            <Row className="h-[38px] text-[#545b64]"><T w={77}>AWS Region</T></Row>
            <Row className="h-[14px]"><T w={188}>US East (N. Virginia) us-east-1</T></Row>
          </div>
          <div className="w-[260px] border-r-2 border-[#eaeded] pl-[11px]">
            <Row className="h-[38px] text-[#545b64]"><T w={187}>Amazon resource name (ARN)</T></Row>
            <Row className="h-[26px] pl-2"><Copy /><T w={201} className="ml-[10px]">arn:aws:s3:::cand-c3-free-recipe</T></Row>
            <Row className="h-[25px]"><T w={109}>s-524959562287</T></Row>
          </div>
          <div className="pl-[9px]">
            <Row className="h-[38px] text-[#545b64]"><T w={86}>Creation date</T></Row>
            <Row className="h-[14px]"><T w={234}>March 6, 2021, 12:00:40 (UTC-08:00)</T></Row>
          </div>
        </div>
      </Card>

      <Card className="mt-[26px] h-[321px]">
        <div className="flex h-[135px] shrink-0 flex-col border-b-2 border-[#eaeded] bg-[#fafafa] pt-[13px] pl-[20px] text-[12px] text-[#545b64]">
          <Row><H2 w={152}>Bucket Versioning</H2></Row>
          <Row className="mt-[7px] h-[14px]"><T w={756}>Versioning is a means of keeping multiple variants of an object in the same bucket. You can use versioning to preserve, retrieve, and restore</T></Row>
          <Row className="h-[14px]"><T w={747}>every version of every object stored in your Amazon S3 bucket. With versioning, you can easily recover from both unintended user actions</T></Row>
          <Row className="h-[14px]"><T w={130}>and application failures.</T><Learn /></Row>
          <Edit className="mt-[5px]" />
        </div>
        <div className="flex flex-col pt-[13px] pl-[20px]">
          <Row className="h-5 text-[#545b64]"><T w={113}>Bucket Versioning</T></Row>
          <Row className="mt-[6px] h-5"><T w={54}>Disabled</T></Row>
          <Row className="mt-[20px] h-5 text-[#545b64]"><T w={255}>Multi-factor authentication (MFA) delete</T></Row>
          <Row className="mt-px h-5 text-[12px] text-[#687078]"><T w={749}>An additional layer of security that requires multi-factor authentication for changing Bucket Versioning settings and permanently deleting</T></Row>
          <Row className="h-5 text-[12px] text-[#687078]"><T w={562}>object versions. To modify MFA delete settings, use the AWS CLI, AWS SDK, or the Amazon S3 REST API.</T><Learn /></Row>
          <Row className="mt-[3px] h-5"><T w={54}>Disabled</T></Row>
        </div>
      </Card>

      <Card className="mt-[27px] h-[267px]">
        <div className="flex h-[75px] shrink-0 justify-between border-b-2 border-[#eaeded] bg-[#fafafa] pr-[20px] pl-[20px]">
          <div className="pt-[13px]">
            <Row><H2 w={38}>Tags</H2><T w={21} className="ml-[6px] pb-[3px] text-[17px] font-normal text-[#687078]">(3)</T></Row>
            <Row className="mt-[10px] h-5 text-[12px] text-[#545b64]"><T w={317}>Track storage cost or other criteria by tagging your bucket.</T><Learn /></Row>
          </div>
          <Edit className="mt-[13px]" />
        </div>
        <div className="flex h-[46px] shrink-0 items-center border-b-2 border-[#eaeded] bg-[#fafafa] pl-[22px] font-bold text-[#545b64]">
          <div className="flex h-[22px] w-[198px] items-center border-r-2 border-[#eaeded]"><T w={24} className="pb-[2px]">Key</T></div>
          <T w={37} className="ml-[20px] pb-[2px]">Value</T>
        </div>
        {tags.map(([a, b, v], i) => (
          <div key={i} className="flex h-12 shrink-0 border-b-2 border-[#eaeded] pt-[3px] pb-[3px] pl-[21px]">
            <div className="w-[217px]">
              <Row><T w={a[1]}>{a[0]}</T></Row>
              <Row><T w={b[1]}>{b[0]}</T></Row>
            </div>
            <div className="flex flex-col justify-center">
              {v.map(([t, w]) => <Row key={t}><T w={w}>{t}</T></Row>)}
            </div>
          </div>
        ))}
      </Card>

      <Card className="mt-[25px] h-[399px]">
        <div className="flex h-[69px] shrink-0 justify-between border-b-2 border-[#eaeded] bg-[#fafafa] pr-[20px] pl-[20px]">
          <div className="pt-[13px]">
            <Row className="h-[21px]"><H2 w={159}>Default encryption</H2></Row>
            <Row className="mt-[4px] h-5 text-[12px] text-[#545b64]"><T w={305}>Automatically encrypt new objects stored in this bucket.</T><Learn /></Row>
          </div>
          <Edit className="mt-[13px]" />
        </div>
        <div className="flex flex-col pt-[15px] pl-[20px]">
          <Row className="h-5 text-[#545b64]"><T w={119}>Default encryption</T></Row>
          <Row className="mt-1 h-5"><T w={51}>Enabled</T></Row>
          <Row className="mt-5 h-5 text-[#545b64]"><T w={143}>Server-side encryption</T></Row>
          <Row className="mt-[6px] h-5"><T w={207}>AWS-KMS master-key (SSE-KMS)</T></Row>
          <Row className="mt-5 h-5 text-[#545b64]"><T w={132}>KMS master key ARN</T></Row>
          <Row className="mt-[10px] h-5 pl-[9px] text-[#0073bb]"><Copy /><T w={324} className="ml-[9px]">arn:aws:kms:us-east-1:524959562287:alias/aws/s3</T><Ext className="ml-[7px]" /></Row>
          <Row className="mt-[26px] h-5 text-[#545b64]"><T w={69}>Bucket Key</T></Row>
          <Row className="mt-px h-5 text-[12px] text-[#687078]"><T w={741}>Reduce encryption costs by decreasing calls to AWS KMS for new objects in this bucket. To specify a Bucket Key setting for an object, use</T></Row>
          <Row className="h-5 text-[12px] text-[#687078]"><T w={256}>the AWS CLI, AWS SDK, or Amazon S3 Rest API.</T><Learn /></Row>
          <Row className="mt-[5px] h-5"><T w={51}>Enabled</T></Row>
        </div>
      </Card>
      <Card className="mt-[25px] h-10" />
    </div>
  );
}

function Footer() {
  return (
    <div className="flex h-9 shrink-0 items-center rounded-b-[10px] border-2 border-[#545b64] bg-[#232f3e] pt-[3px] text-[12px] leading-none font-medium text-[#e3e6e8]">
      <T w={51} className="ml-[18px]">Feedback</T>
      <T w={65} className="ml-[25px]">English (US)</T>
      <Caret className="ml-[7px]" />
      <T w={383} className="ml-auto font-normal text-[#aab7b8]">© 2008 - 2021, Amazon Web Services, Inc. or its affiliates. All rights reserved.</T>
      <T w={75} className="ml-[30px]">Privacy Policy</T>
      <T w={70} className="ml-[25px]">Terms of Use</T>
      <T w={103} className="mr-[18px] ml-[26px]">Cookie preferences</T>
    </div>
  );
}

export default function App() {
  return (
    <div className="flex h-[1760px] w-[2880px] flex-col overflow-hidden bg-[#202124] font-['Noto_Sans',sans-serif]">
      <div className="flex h-[6px] shrink-0 items-end overflow-hidden border-b border-black bg-[#36393b] pl-[180px] font-['Inter',sans-serif] text-[26px] leading-none text-[#b8babc]">
        <i className="h-[5px] w-8 bg-[#b3050d]" />
        <T w={352} className="ml-[18px] h-[25px]">QS World University Rankings (</T>
        <svg viewBox="0 0 14 14" className="ml-[14px] size-[14px] shrink-0" stroke="#b8babc" strokeWidth="2.400"><path d="m1 1 12 12M13 1 1 13" /></svg>
        <i className="ml-[70px] h-[5px] w-[4px] bg-[#9a9c9e]" />
      </div>
      <div className="flex shrink-0 flex-col border-t-2 border-[#6b6c6e] bg-[#35363a] font-['Inter',sans-serif]">
        <TabStrip />
        <Toolbar />
        <Bookmarks />
      </div>
      <div className="h-[2px] shrink-0 bg-[#292a2c]" />
      <div className="flex shrink-0 flex-col"><AwsHeader /></div>
      <div className="flex h-[1454px] shrink-0">
        <Sidebar />
        <Content />
      </div>
      <Footer />
    </div>
  );
}
